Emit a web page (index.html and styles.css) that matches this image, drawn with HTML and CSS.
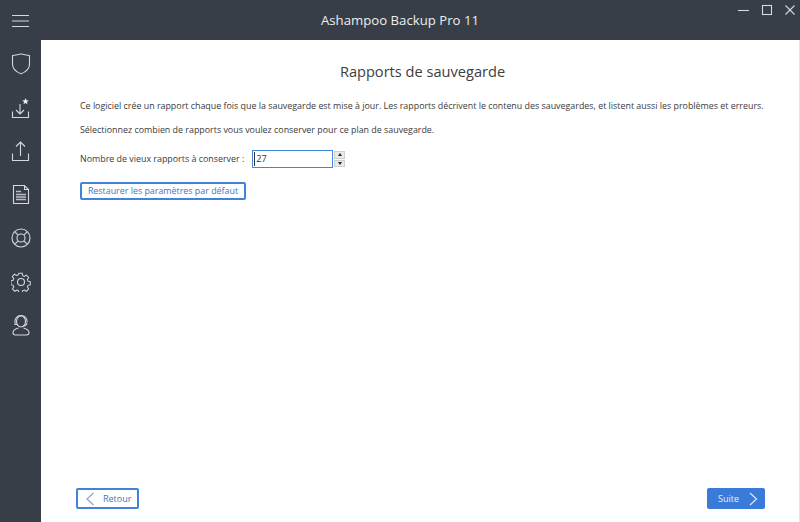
FILE: index.html
```html
<!DOCTYPE html>
<html lang="fr">
<head>
<meta charset="utf-8">
<title>Ashampoo Backup Pro 11</title>
<link rel="stylesheet" href="styles.css">
</head>
<body>
<div class="app">
  <header class="titlebar">
    <button class="menu-btn" aria-label="Menu">
      <svg width="18" height="14" viewBox="0 0 18 14"><path d="M0 1.500h17M0 7h17M0 12.500h17" class="ic"/></svg>
    </button>
    <h1 class="app-title">Ashampoo Backup Pro 11</h1>
    <div class="win-controls">
      <svg width="12" height="12" viewBox="0 0 12 12"><path d="M0 6.500h11" class="ic"/></svg>
      <svg width="12" height="12" viewBox="0 0 12 12"><rect x="1.500" y="1.500" width="9" height="9" class="ic"/></svg>
      <svg width="12" height="12" viewBox="0 0 12 12"><path d="M1.500 1.500l9 9M10.500 1.500l-9 9" class="ic"/></svg>
    </div>
  </header>
  <div class="body">
    <nav class="sidebar">
      <div class="nav-item"><svg width="20" height="22" viewBox="0 0 20 22"><path d="M1.500 2.500C4.500 2.500 7 1.800 10 1c3 .8 5.500 1.500 8.500 1.500v8.500c0 4.500-3.500 8-8.500 9.800-5-1.800-8.500-5.300-8.500-9.800z" class="ic"/></svg></div>
      <div class="nav-item"><svg width="20" height="22" viewBox="0 0 20 22"><path d="M1.500 14.500v6h16v-6M9 7v10M5 13l4 4 4-4" class="ic"/><path d="M14.500 1l.9 2.300 2.400.1-1.900 1.500.7 2.400-2.100-1.400-2.100 1.400.7-2.400-1.900-1.500 2.400-.1z" class="ic-fill"/></svg></div>
      <div class="nav-item"><svg width="20" height="22" viewBox="0 0 20 22"><path d="M1.500 13.500v7h16v-7M9.500 16V2M5 6.500l4.500-4.500 4.500 4.500" class="ic"/></svg></div>
      <div class="nav-item"><svg width="18" height="21" viewBox="0 0 18 21"><path d="M1.500 1.500h11l4 4v14h-15zM12.500 1.500v4h4" class="ic"/><path d="M4 7.500h5M4 10.500h10M4 13h10M4 15.500h10" class="ic-thick"/></svg></div>
      <div class="nav-item"><svg width="20" height="20" viewBox="0 0 20 20"><circle cx="10" cy="10" r="9" class="ic"/><circle cx="10" cy="10" r="4" class="ic"/><path d="M3.800 3.800l3.400 3.400M16.200 3.800l-3.400 3.400M3.800 16.200l3.400-3.400M16.200 16.200l-3.400-3.400" class="ic-thick"/></svg></div>
      <div class="nav-item"><svg width="20" height="20" viewBox="0 0 20 20"><path d="M8.200 1h3.600l.5 2.600 1.700.8 2.300-1.400 2.500 2.500-1.400 2.300.7 1.700 2.400.6v3.400l-2.400.6-.7 1.700 1.400 2.200-2.500 2.500-2.300-1.400-1.700.7-.5 2.400H8.200l-.5-2.400-1.700-.7-2.300 1.400-2.500-2.500 1.400-2.200-.7-1.700-2.400-.6V9.100l2.400-.6.7-1.700L.9 4.500l2.500-2.500 2.300 1.400 1.700-.8z" transform="translate(.4 .4) scale(.92)" class="ic"/><circle cx="10" cy="10" r="3.500" class="ic"/></svg></div>
      <div class="nav-item"><svg width="18" height="21" viewBox="0 0 18 21"><ellipse cx="9" cy="6.500" rx="4.500" ry="5.500" class="ic"/><path d="M3 8.500V6a6 5.500 0 0 1 12 0v1M15 7.500c0 2-2 3.500-4 3.800M3 6v3.500h2.500M6.500 13c-3 .8-5.500 2.300-5.500 4.500 0 1.500 1 2.500 2.500 2.500h11c1.500 0 2.500-1 2.500-2.500 0-2.200-2.500-3.700-5.500-4.500" class="ic"/></svg></div>
    </nav>
    <main class="main">
      <h2 class="page-title">Rapports de sauvegarde</h2>
      <p class="text">Ce logiciel crée un rapport chaque fois que la sauvegarde est mise à jour. Les rapports décrivent le contenu des sauvegardes, et listent aussi les problèmes et erreurs.</p>
      <p class="text text-second">Sélectionnez combien de rapports vous voulez conserver pour ce plan de sauvegarde.</p>
      <div class="field-row">
        <label class="text" for="count">Nombre de vieux rapports à conserver :</label>
        <div class="input-box" id="count"><span class="caret"></span>27</div>
        <div class="spinner">
          <span class="spin-btn"><i class="up"></i></span>
          <span class="spin-btn"><i class="down"></i></span>
        </div>
      </div>
      <button class="btn-outline restore">Restaurer les paramètres par défaut</button>
      <div class="footer">
        <button class="btn-outline back">
          <svg width="9" height="14" viewBox="0 0 9 14"><path d="M7.500 1L1 7l6.500 6" class="chev-back"/></svg>
          Retour
        </button>
        <button class="btn-primary next">
          Suite
          <svg width="9" height="14" viewBox="0 0 9 14"><path d="M1 1l6.500 6L1 13" class="chev-next"/></svg>
        </button>
      </div>
    </main>
  </div>
</div>
</body>
</html>
```
FILE: styles.css
```css
* { box-sizing: border-box; }
html, body { margin: 0; height: 100%; }
body { font-family: "Open Sans", "Noto Sans", sans-serif; background: #fff; overflow: hidden; }
.app { width: 800px; height: 522px; display: flex; flex-direction: column; background: #383e47; }
.ic { fill: none; stroke: #d5d8dc; stroke-width: 1.1; }
.ic-thick { fill: none; stroke: #b9bdc3; stroke-width: 1.4; }
.ic-fill { fill: #eef0f2; }

.titlebar { height: 40px; flex: none; display: flex; align-items: center; }
.menu-btn { width: 41px; height: 40px; padding: 2px 0 0 0; border: 0; background: none; display: flex; align-items: center; justify-content: center; }
.app-title { flex: 1; margin: 0; padding-left: 43px; text-align: center; font-size: 13.200px; font-weight: 400; color: #eceef0; }
.win-controls { width: 84px; height: 40px; display: flex; gap: 11px; padding: 4px 0 0 22px; align-items: flex-start; }
.win-controls svg { width: 12px; height: 12px; flex: none; }

.body { flex: 1; display: flex; min-height: 0; }
.sidebar { width: 41px; flex: none; padding-top: 2.250px; display: flex; flex-direction: column; }
.nav-item { height: 43.500px; display: flex; align-items: center; justify-content: center; }

.main { flex: 1; background: #fff; border-right: 1px solid #e4e4e4; padding: 0 34px 13px 39px; display: flex; flex-direction: column; min-width: 0; }
.page-title { margin: 21px 0 0; text-align: center; font-size: 14.600px; line-height: 20px; font-weight: 400; color: #3d3d3d; }
.text { margin: 0; font-size: 8.880px; line-height: 14px; color: #3a3a3a; white-space: nowrap; }
.main > .text:first-of-type { margin-top: 18px; }
.text-second { margin-top: 10px; }
.field-row { margin-top: 13px; display: flex; align-items: center; height: 18px; }
.input-box { width: 81px; height: 18px; margin-left: 8px; border: 1px solid #3f86dc; font-size: 9.200px; line-height: 16px; color: #333; padding-left: 3px; position: relative; }
.caret { position: absolute; left: 1px; top: 1px; width: 1px; height: 14px; background: #333; }
.spinner { width: 11px; height: 16px; margin-left: 1px; display: flex; flex-direction: column; gap: 1px; }
.spin-btn { flex: 1; background: #eaeaea; border: 1px solid #cfcfcf; display: flex; align-items: center; justify-content: center; }
.up, .down { width: 0; height: 0; border-left: 2px solid transparent; border-right: 2px solid transparent; }
.up { border-bottom: 3px solid #222; }
.down { border-top: 3px solid #222; }

.btn-outline { background: #fff; border: 2px solid #4382dc; border-radius: 2px; color: #3f74c4; font-family: inherit; padding: 0; }
.restore { width: 166px; height: 18px; margin-top: 14px; font-size: 8.880px; line-height: 14px; }

.footer { margin-top: auto; margin-left: -4px; display: flex; justify-content: space-between; align-items: center; }
.back { width: 63px; height: 21px; font-size: 9px; display: flex; align-items: center; gap: 8px; padding-left: 8px; }
.next { width: 58px; height: 21px; background: #3a7bd9; border: 0; border-radius: 2px; color: #e6effb; font-family: inherit; font-size: 9px; display: flex; align-items: center; gap: 10px; padding: 0 0 0 11px; }
.chev-back { fill: none; stroke: #8fa3c8; stroke-width: 1.200; }
.chev-next { fill: none; stroke: #dbe7f8; stroke-width: 1.200; }
```
